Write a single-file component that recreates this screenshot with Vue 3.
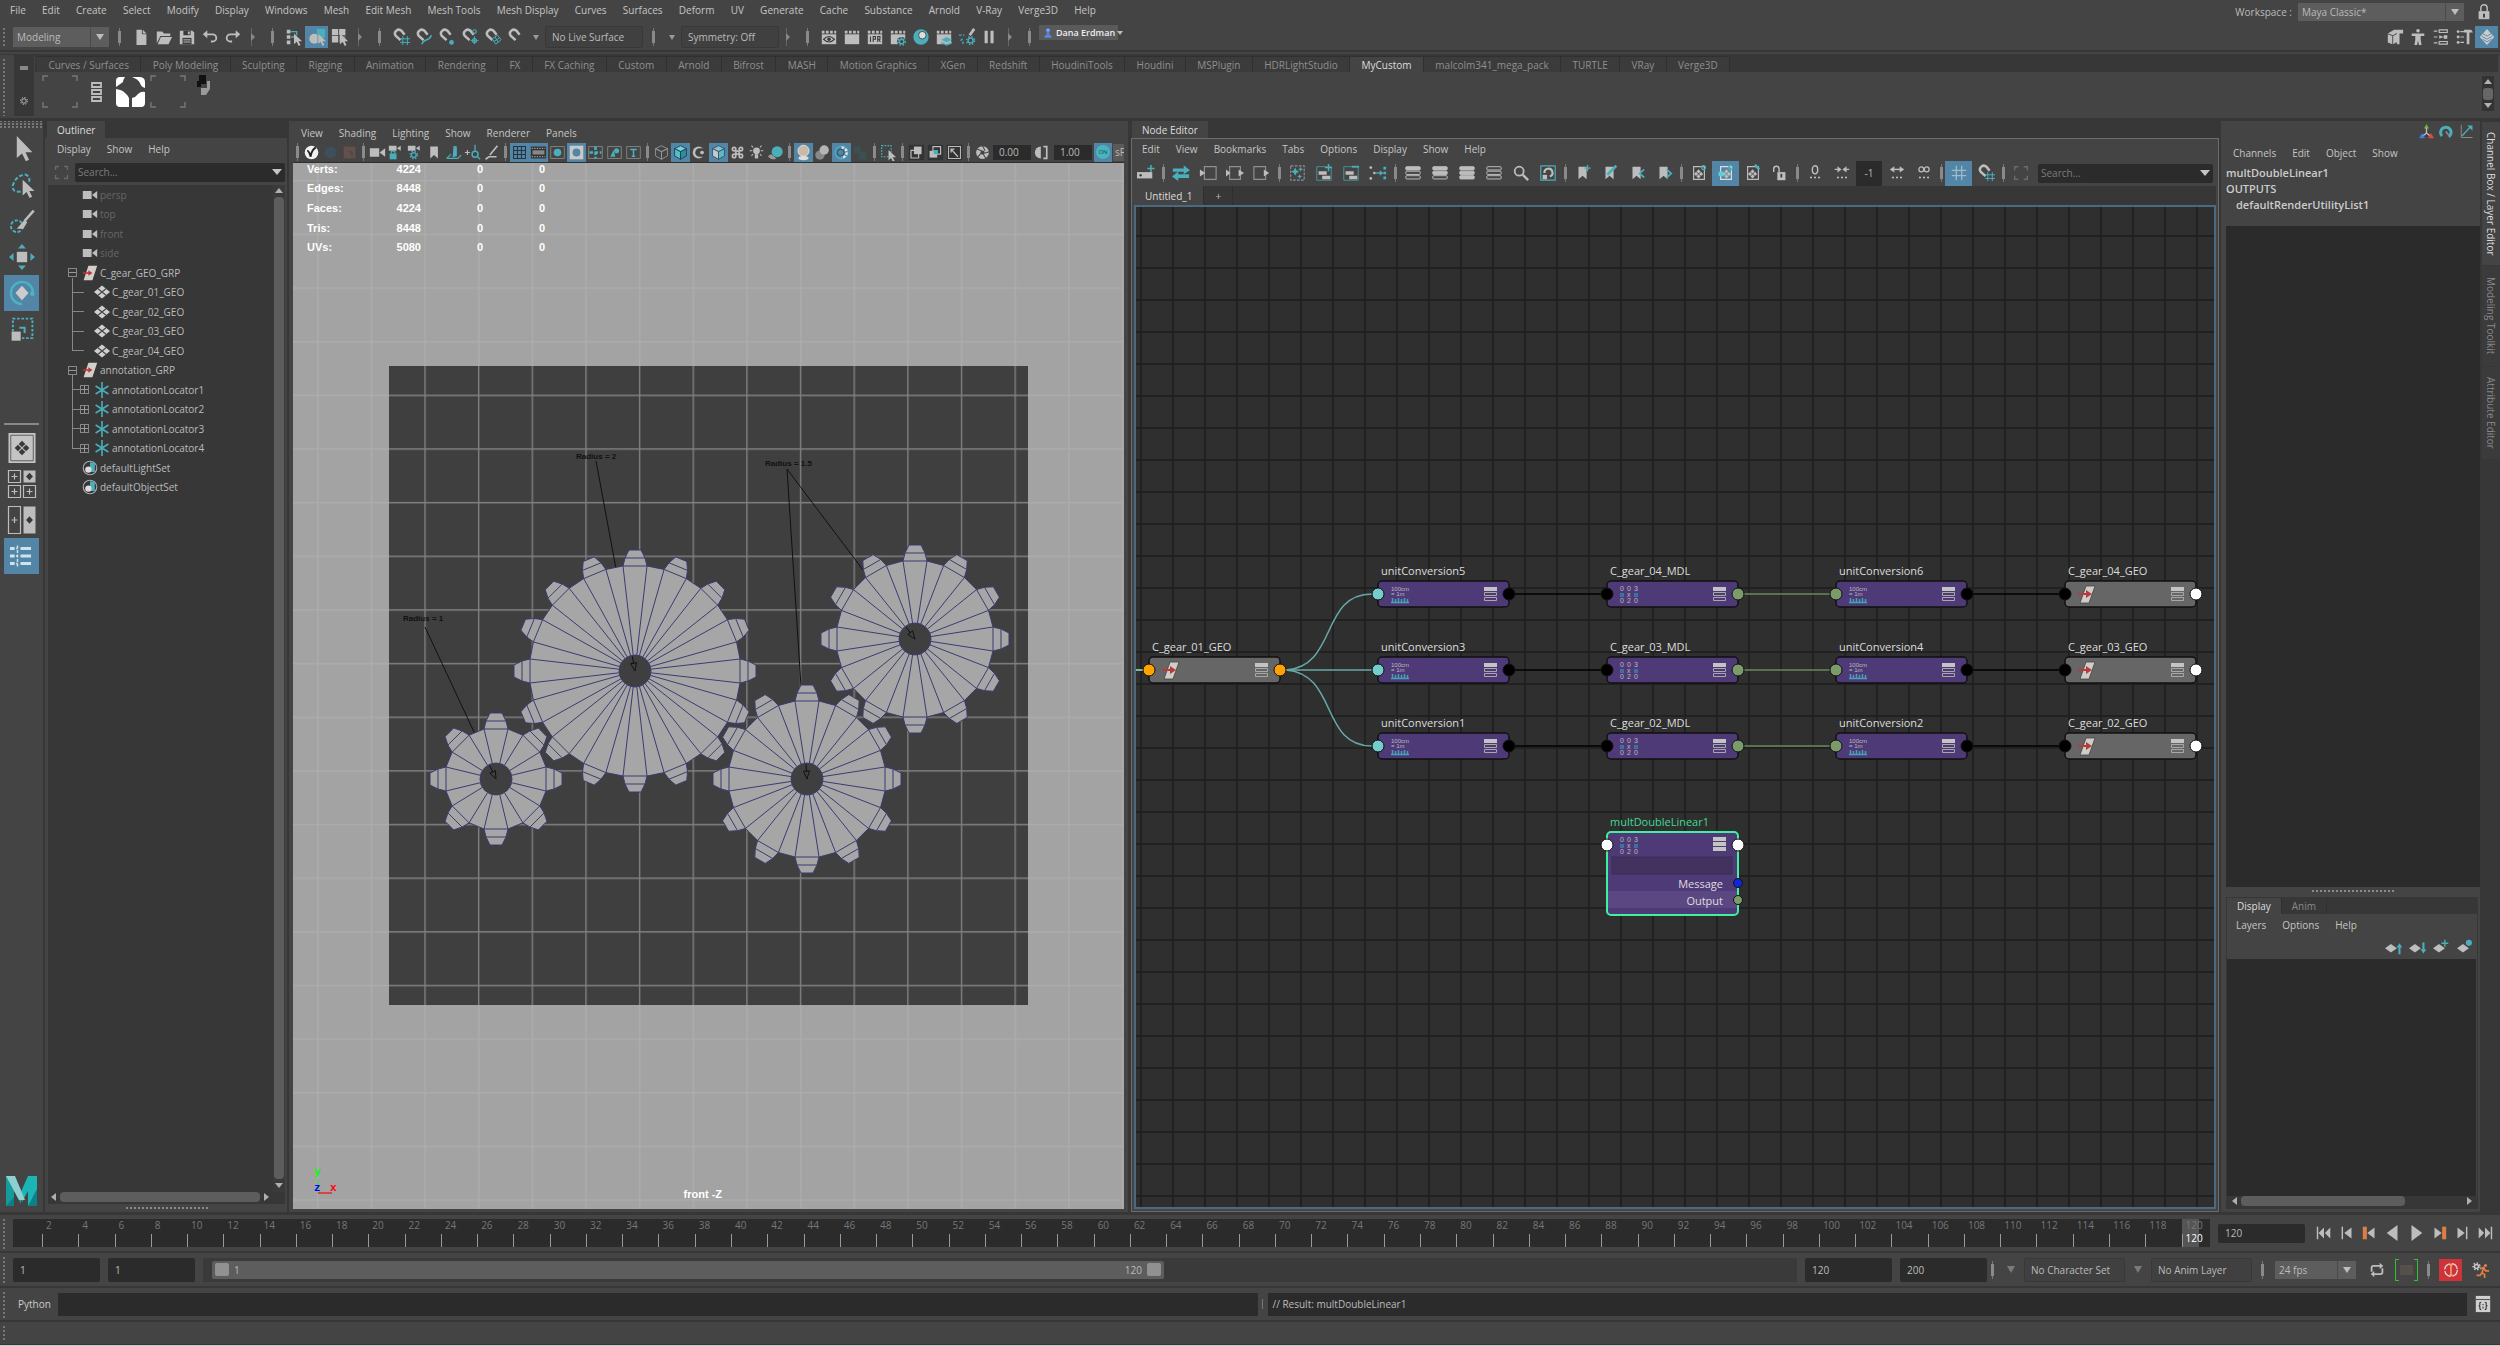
<script setup>
const menus = ['File', 'Edit', 'Create', 'Select', 'Modify', 'Display', 'Windows', 'Mesh', 'Edit Mesh', 'Mesh Tools', 'Mesh Display', 'Curves', 'Surfaces', 'Deform', 'UV', 'Generate', 'Cache', 'Substance', 'Arnold', 'V-Ray', 'Verge3D', 'Help']
const shelves = ['Curves / Surfaces', 'Poly Modeling', 'Sculpting', 'Rigging', 'Animation', 'Rendering', 'FX', 'FX Caching', 'Custom', 'Arnold', 'Bifrost', 'MASH', 'Motion Graphics', 'XGen', 'Redshift', 'HoudiniTools', 'Houdini', 'MSPlugin', 'HDRLightStudio', 'MyCustom', 'malcolm341_mega_pack', 'TURTLE', 'VRay', 'Verge3D']
const viewMenus = ['View', 'Shading', 'Lighting', 'Show', 'Renderer', 'Panels']
const nodeMenus = ['Edit', 'View', 'Bookmarks', 'Tabs', 'Options', 'Display', 'Show', 'Help']

// Shared icon fragments
const G = '#bdbdbd'
const T = '#4aaebb'
const D = '#3a3a3a'
const f = (d, c = G, extra = '') => `<path d="${d}" fill="${c}" ${extra}/>`
const s = (d, c = G, w = 1.5, extra = '') => `<path d="${d}" fill="none" stroke="${c}" stroke-width="${w}" ${extra}/>`
const circ = (x, y, r, c = G) => `<circle cx="${x}" cy="${y}" r="${r}" fill="${c}"/>`
const ring = (x, y, r, c = G, w = 1.5, extra = '') => `<circle cx="${x}" cy="${y}" r="${r}" fill="none" stroke="${c}" stroke-width="${w}" ${extra}/>`
const cog = (x, y, r, c = T) => ring(x, y, r, c, 1.6) + ring(x, y, r + 1.6, c, 1.6, 'stroke-dasharray="1.6 1.9"')
const arrow = (x, y) => f(`M${x} ${y}v12l3-2.6 2.2 4.6 2-1-2.2-4.4h4z`)
const magnet = s('M9.500 13.500 L4 8.500 A4.300 4.300 0 0 1 10.500 3 L14 7.500', G, 2.8)
const clap = f('M2 7h16v11H2z') + s('M2 4.5h16', G, 3, 'stroke-dasharray="3 1.6"')
const cam = f('M2 6h10v9H2zM12.5 10.5L18 6v9z')
const camSmall = f('M1 2h9v6H1zM10.5 5L15 2v6z')
const bmk = f('M5 3h9v14l-4.5-4L5 17z')
const cube = (a, b, c, st) => f('M10 2l7 3.5-7 3.5-7-3.5z', a, `stroke="${st}"`) + f('M3 5.5L10 9v9l-7-4z', b, `stroke="${st}"`) + f('M17 5.5L10 9v9l7-4z', c, `stroke="${st}"`)
const stack = (a, b, c) => [a, b, c].map((on, i) => `<rect x="2" y="${3 + i * 5}" width="16" height="3.6" rx="1" fill="${on ? G : 'none'}" stroke="${G}" stroke-width="1.1"/>`).join('')
const dots = circ(5.5, 15, 1.2) + circ(10, 15, 1.2) + circ(14.5, 15, 1.2)
const four = (x, y, r, c) => [[0, -r], [r, 0], [0, r], [-r, 0]].map(([a, b]) => f(`M${x + a} ${y + b - r + 0.5}l${r - 0.5} ${r - 0.5}-${r - 0.5} ${r - 0.5}-${r - 0.5}-${r - 0.5}z`, c)).join('')
const frame = s('M2 3h16v14H2z', '#8a8a8a', 1)
const layer = f('M0 11l7-5 7 5-7 5z')

const icons = {
  file: f('M5 2h6v5h5v12H5z') + f('M12 2l4 4h-4z'),
  open: f('M2 4h6l2 2h7v3H6l-4 8z') + f('M6.5 10H19l-4 8H3z'),
  save: f('M2 3h14l2 2v13H2z') + f('M6 3h8v5H6z', D) + f('M11 4h2v3h-2z') + f('M5 11h10v7H5z', D) + s('M6 13.2h8M6 15.6h8', G, 1.1),
  undo: s('M5 7h8a4 4 0 0 1 0 8h-2', G, 2) + f('M2 7l5-4.5v9z'),
  redo: s('M15 7H7a4 4 0 0 0 0 8h2', G, 2) + f('M18 7l-5-4.5v9z'),
  selH: f('M2 2h4v4H2zM2 8h4v4H2zM2 14h4v4H2z') + s('M6 4h7v4M7 10h3', T, 1.4) + arrow(10, 6),
  selO: f('M10 1h9v10h-9z', T) + circ(7, 12, 5.5) + arrow(11, 6) + s('M11 6v12', '#5285a6', 0.8),
  selC: f('M1 1h7v7H1zM9 1h7v7H9zM1 9h7v7H1z') + f('M9 9h7v7H9z', '#777') + arrow(10, 6),
  mGrid: magnet + s('M9 12h11M9 16h11M12 9v10M17 9v10', T, 1.1),
  mCurve: magnet + s('M8 18c0-6 9-3 10-10', T, 1.8),
  mPoint: magnet + circ(15, 16, 2.6, T),
  mProj: magnet + ring(15, 4, 2, T, 1.2) + ring(15, 14, 2.2, T, 1.3) + s('M15 9v9M10.5 14h9', T, 1),
  mPlane: magnet + s('M9 12l6-4 4 5-6 5zM12 10l4 6M11 15l6-4', T, 1.1),
  mLive: magnet,
  eye: clap + s('M4 12.5q6-6 12 0q-6 6-12 0z', D, 1.2) + circ(10, 12.5, 2, D),
  clap,
  ipr: clap + s('M5 9.5v6M8 15.5v-6h2.5v3H8M13 15.5v-6h2.5v3H13M14 12.5l2 3', D, 1.2),
  clapCog: clap + circ(14, 15, 5, '#444') + cog(14, 15, 2.5),
  hyper: circ(10, 10, 8.5, T) + circ(11.5, 8, 4.2, '#ddd') + ring(11.5, 8, 4.2, '#444', 1),
  clapLay: clap + f('M7 13l6-3 6 3-6 3z', T) + s('M7 16l6 3 6-3', T, 1.4),
  paint: s('M18 1l-5 7', G, 3) + s('M1 8h6M5 12l-3 3M6 15l-1 3', T, 1.4, 'stroke-dasharray="3 1.5"') + cog(14, 14, 2.8),
  pause: f('M4 3h3.5v14H4zM10.5 3H14v14h-3.5z'),
  box3d: f('M2 6l7-4 5 2-6 4zM2 7l5 2v9l-5-2zM8 9l5-3v9l-5 3z') + f('M9 2h10v4h-4v12h-3V6z'),
  human: circ(10, 3, 2) + f('M3 6h14v3h-4v4l1 6h-3l-1-5-1 5H6l1-6V9H3z'),
  attr: s('M8 2h9v3H8zM8 15h9v3H8zM2 3.5h4M2 16.5h4M2 10h4', G, 1.3) + f('M8 8l5 2-5 2zM13 8h4v4h-4z'),
  tools: circ(3.5, 4, 1.6) + circ(3.5, 10, 1.6) + circ(3.5, 16, 1.6) + s('M6 4h4M6 10h4M6 16h4', G, 1.3) + f('M10 2h8l2 3h-4v13h-3V5h-3z'),
  layers: f('M10 1l8 9-8 9-8-9z', '#ccc') + s('M5 6l5 3 5-3M4 9l6 3.4L16 9M5 12.4l5 3 5-3', '#5285a6', 1),
  lock: f('M4 9h12v9H4z') + s('M6.5 9V5.5a3.5 3.5 0 0 1 7 0V9', G, 1.6) + f('M9 12h2v4H9z', '#333'),

  vray: circ(10, 10, 8, '#f2f2f2') + s('M5 8q2 0 4 7Q10 7 15 4', '#222', 2.2),
  ball: circ(10, 10, 7, '#3d4f5c'),
  dimsq: f('M3 3h14v14H3z', '#63504a') + f('M8 7l6 9V9z', '#4a4a4a'),
  cam: f('M1 5h11v10H1zM12.5 10L19 5v10z'),
  camLock: camSmall + f('M2 11h8v7H2z', T) + s('M4 11V8.5h4V11', T, 1.4),
  camCog: camSmall + cog(8, 13, 2.8),
  bmk,
  plane: f('M10 2l4 1v11l-5 2z', T) + s('M2 17l5-5M2 17h13l4-4', T, 1.4),
  pan: s('M1 10h6M4 7v6', G, 1.3) + ring(13, 12, 3.5, T, 1.7) + s('M13 1v7M16 15l3 3', T, 1.5),
  pen: s('M17 2L8 13M3 18l4-3h9', G, 2),
  grid: s('M3 3h14v14H3zM7.6 3v14M12.3 3v14M3 7.6h14M3 12.3h14', '#26333c', 1.2),
  film: f('M1 3h18v14H1z', '#333') + s('M2 5.2h16M2 14.8h16', '#999', 1.6, 'stroke-dasharray="1.6 1.4"') + f('M3 7.4h14v5H3z', '#888'),
  rgate: frame + circ(10, 10, 4.5, T),
  gmask: f('M2 2h16v16H2z', '#c8c8c8') + circ(10, 10, 4.6, '#5285a6'),
  fchart: frame + s('M10 3v14M3 10h14', T, 3, 'stroke-dasharray="4 2"'),
  safe: frame + f('M5 15l4-8 2 8z', T) + circ(12.5, 8, 3, T),
  title: frame + s('M6 6.5h8M10 6.5v8M8 14.5h4', T, 1.8),
  wire: cube('none', 'none', 'none', '#999'),
  solid: cube('#6cd3de', '#55bccb', '#2c8fa0', '#1d3b46'),
  half: circ(9, 10, 7) + f('M10 5h8v10h-8a5 5 0 0 1 0-10z', '#444') + circ(13, 10, 2.2),
  wsolid: cube('#8fc0cb', '#c9c9c9', '#5fb7c4', '#28536c'),
  check: [[6, 6], [14, 6], [10, 10], [6, 14], [14, 14]].map(([x, y]) => circ(x, y, 3) + circ(x, y, 1, D)).join(''),
  bulb: circ(10, 8, 4) + f('M8 12h4v5H8z') + s('M2 8h3M15 8h3M4 2l2 2M16 2l-2 2M4 14l2-2M16 14l-2-2', G, 1.2),
  shadow: circ(12, 9, 6.5, T) + f('M1 14q4 6 10 3l-6-5z', '#999'),
  ao: '<ellipse cx="10" cy="16.500" rx="6" ry="2.500" fill="#ddd"/>' + circ(10, 8, 6.5, '#cbb9a6') + ring(10, 8, 6.5, '#e8e8e8', 1),
  blur: circ(7, 13, 5.5, '#888') + circ(12, 7, 5.5, '#b5b5b5'),
  aa: ring(10, 10, 7.5, T, 1.6) + s('M10 4a6 6 0 0 1 0 12', '#e0e0e0', 3, 'stroke-dasharray="3 1.5"') + ring(9, 10, 4, '#26485e', 1),
  dim2: f('M2 3h8v8H2zM8 9h9v9H8z', '#3b5053'),
  isel: s('M2 2h11v13H2z', T, 1.4, 'stroke-dasharray="2 1.4"') + arrow(10, 7),
  xr1: f('M1 1h18v18H1z', '#333') + f('M7 3h9v9H7z') + s('M3.5 7.5h9v9h-9z', G, 1.4),
  xr2: f('M1 1h18v18H1z', '#333') + s('M7 3h9v9H7z', G, 1.4) + f('M3 8h9v8H3z') + f('M8 7h5v5H8z', T),
  xr3: f('M1 1h18v18H1z', '#333') + s('M3 3h14v14H3z', G, 1.2) + s('M6 6l8 9M6 10V6h4', G, 1.6),
  iris: ring(10, 10, 5, G, 5) + s('M10 2l3 6M18 9l-6 2M14 17l-3-5M4 16l4-5M3 6l6 2', '#444', 1.2),
  gamma: f('M8 3v14a7 7 0 0 1 0-14z') + s('M11 3h4v14h-4', G, 2),

  nAdd: f('M0 9h17v7H0z') + circ(4, 12.5, 1.3, D) + s('M15.500 1v8M11.500 5h8', T, 1.7),
  swap: f('M1 5h12V1.500L20 7l-7 4.500V8.500H1z', T) + f('M19 11.500H7V8l-7 6 7 5v-3.500h12z', T),
  nIn: s('M6 3h13v14H6z', '#8f8f8f', 1.3) + f('M1 6l6 4-6 4z'),
  nIO: s('M4 3h12v14H4z', '#8f8f8f', 1.3) + f('M0 6l5 4-5 4zM14 6l6 4-6 4z'),
  nOut: s('M1 3h13v14H1z', '#8f8f8f', 1.3) + f('M12 6l6 4-6 4z'),
  clear: s('M3 2h15v16H3z', '#8f8f8f', 1.3, 'stroke-dasharray="3 1.500"') + f('M8 4l1.500 3 3 1.500-3 1.500L8 13l-1.500-3-3-1.500 3-1.500zM14 3l.8 2 2 .8-2 .8-.8 2-.8-2-2-.8 2-.8zM13 11l.8 2 2 .8-2 .8-.8 2-.8-2-2-.8 2-.8z', T),
  gAdd: s('M2 3h16v15H2z', T, 0.8) + f('M4 8h9v4H4zM8 13h9v4H8z') + s('M15 0v8M11 4h8', T, 1.600),
  gRem: s('M2 3h16v15H2z', T, 0.8) + f('M4 8h9v4H4zM8 13h9v4H8z') + s('M11 3h8', T, 2),
  graph: circ(2, 4, 1.500) + circ(2, 16, 1.500) + circ(6, 10, 1.500) + s('M8 10h5', T, 1.600) + f('M12 7l4 3-4 3zM16 3h3v3h-3zM16 8.500h3v3h-3zM16 14h3v3h-3z', T),
  b1: stack(1, 0, 0),
  b2: stack(1, 1, 0),
  b3: stack(1, 1, 1),
  b0: stack(0, 0, 0),
  find: ring(8, 8, 5, G, 2) + s('M12 12l6 6', G, 2.600),
  sync: s('M2 2h16v16H2z', T, 1.300) + f('M4 12h5v5H4z') + s('M6 10a4.500 4.500 0 1 1 6 4', G, 2.400),
  bAdd: bmk + s('M15 1v7M11.500 4.500h7', T, 1.500),
  bEdit: bmk + s('M17 2L7 12', T, 3),
  bPrev: bmk + s('M18 6l-5 4.500 5 4.500', T, 2),
  bNext: bmk + s('M13 6l5 4.500-5 4.500', T, 2),
  pin1: s('M4 3h12v14H4z', G, 1.300) + four(9.500, 11, 2.800, G) + ring(15, 4, 2.200, T, 1.300),
  pin2: s('M4 3h12v14H4z', '#ddd', 1.300) + four(10.500, 11, 2.800, G) + circ(4.500, 11, 3, '#5cd0dc') + ring(15, 4, 2.200, T, 1.300),
  pin3: s('M4 3h12v14H4z', G, 1.300) + four(9.500, 11, 2.800, G) + s('M12 1l5 5', T, 3),
  unlock: f('M7 9h9v9H7z') + s('M3 9V5.500a3 3 0 0 1 6 0V9', G, 1.600) + f('M10.500 11h2v4h-2z', D),
  zero: `<ellipse cx="10" cy="6.500" rx="3" ry="4.500" fill="none" stroke="${G}" stroke-width="1.600"/>` + dots,
  inn: s('M2 6h6M12 6h6', G, 1.600) + f('M5 2.500l4.500 3.500L5 9.500zM15 2.500L10.500 6l4.500 3.500z') + dots,
  out: s('M5 6h10', G, 1.600) + f('M7 2.500L2 6l5 3.500zM13 2.500L18 6l-5 3.500z') + dots,
  inf: ring(7, 6, 2.700, G, 1.400) + ring(13, 6, 2.700, G, 1.400) + dots,
  hash: s('M7 2v16M13 2v16M2 7h16M2 13h16', '#9fbccb', 1.400),
  full: s('M3 7V3h4M13 3h4v4M17 13v4h-4M7 17H3v-4', '#6a6a6a', 1.600),

  skipS: f('M2 3h1.600v14H2zM10 4v12l-6-6zM17 4v12l-6-6z'),
  stepS: f('M4 3h1.600v14H4zM15 4v12l-8-6z'),
  keyS: f('M2 3h4.500v14H2z', '#dd7f43') + f('M15 4v12l-8-6z'),
  playB: f('M15 1v18L3 10z'),
  playF: f('M5 1v18l12-9z'),
  keyE: f('M13.500 3H18v14h-4.500z', '#dd7f43') + f('M5 4v12l8-6z'),
  stepE: f('M14.400 3H16v14h-1.600zM5 4v12l8-6z'),
  skipE: f('M16.400 3H18v14h-1.600zM3 4v12l6-6zM10 4v12l6-6z'),
  loop: s('M4 12V7.500q0-2 2-2h9M16 8v4.500q0 2-2 2H5', G, 2) + f('M13 2l4 3.500-4 3.500zM7 11l-4 3.500L7 18z'),
  script: f('M2 1h16v18H2z', '#d0d0d0') + s('M2 5h16', '#555', 1.200) + s('M8 8q-2 0-1.500 2t-1.500 2q2 0 1.500 2T8 16.500M12 8q2 0 1.500 2t1.500 2q-2 0-1.500 2T12 16.500M10 10v1.500M10 13v2', '#333', 1.200),
  run: cog(5, 6, 2.200, '#ccc') + circ(15, 5, 1.800, '#dd7f43') + s('M9 9l4-2 2 4 4 0M13 8l-2 5 3 2 0 4M11 13l-2 3-4 0', '#dd7f43', 1.900),
  autokey: ring(10, 10, 7, '#ddd', 1.400, 'stroke-dasharray="9 2"') + s('M10 4v12M8 16h4M8 4h4', '#f0a070', 1.800),

  axes: f('M6.500 6l3.500-6 3.500 6z', '#6fae3c') + s('M10 5v7M10 12l-5 4M10 12l5 4', '#bbb', 1.800) + f('M0 19l4-7 4 7z', '#3f7de0') + f('M12 19l4-7 4 7z', '#d84a4a'),
  spin: s('M4 16a7 7 0 1 1 9 1', T, 4) + s('M9 10l5 6', '#888', 2.500),
  slope: s('M3 1v17h15', '#8a8a8a', 1.300) + s('M4 16L15 4', T, 1.600) + f('M11 2h7v7z', T),
  lUp: layer + s('M17 18V9', T, 2.500) + f('M13.500 10l3.500-5 3.500 5z', T),
  lDn: layer + s('M17 4v9', T, 2.500) + f('M13.500 12l3.500 5 3.500-5z', T),
  lNew: layer + s('M14 1v8M10 5h8', T, 1.700),
  lSel: layer + circ(14, 4.500, 3.600, T),

  tArrow: f('M6 0v17l4-3.500 3 6 2.400-1.200L12.700 12.500H18z'),
  tLasso: s('M9 15Q2 16 3 10Q6 2 13 2Q17 4 15 9', T, 1.600, 'stroke-dasharray="3 1.500"') + f('M10.500 6v12l3-2.600 2.300 4.600 2-1-2.200-4.400h4z'),
  tPaint: ring(6, 14, 4.500, T, 1.500, 'stroke-dasharray="2.500 1.300"') + s('M19 2l-7 8', G, 2) + f('M12 9l2 2-3 5-5 0z'),
  tMove: f('M6 6h8v8H6z') + f('M10 0l3 3.500H7zM10 20l3-3.500H7zM0 10l3.500-3v6zM20 10l-3.500-3v6z', T),
  tRot: f('M10 4.500l5 5.500-5 5.500L5 10z', '#ccc') + s('M10 18.500A8.500 8.500 0 1 1 18.500 10', '#4ab4c2', 1.800) + circ(18, 10.500, 1.800, '#4ab4c2'),
  tScale: s('M3 12V2h15v15h-8', T, 1.500, 'stroke-dasharray="2 1.300"') + s('M8 9h4v4', T, 1.600) + f('M2 12h7v7H2z'),
  lay1: f('M1 0h18v20H1z', '#c4c4c4') + s('M2.500 1.500h15v17h-15z', '#555', 0.6) + four(10, 10, 2.700, D),
  lay2: s('M1 1h8v8H1zM11 11h8v8h-8zM1 11h8v8H1z', G, 0.8) + f('M11 1h8v8h-8z') + f('M15 2.500l2.300 2.500-2.300 2.500-2.300-2.500z', D) + s('M5 3v4M3 5h4M5 13v4M3 15h4M15 13v4M13 15h4', G, 0.8),
  lay3: s('M1 1h8v18H1z', G, 0.8) + f('M11 1h8v18h-8z') + f('M15 7.500l2.300 2.500-2.300 2.500-2.300-2.500z', D) + s('M5 8v4M3 10h4', G, 0.8),
  lay4: s('M7 3v14M3 5h4M3 10h4M3 15h4', '#cfe3ee', 1, 'stroke-dasharray="2 1"') + f('M9 4h7v2H9zM9 9h7v2H9zM9 14h7v2H9zM2 4h3v2H2zM2 9h3v2H2zM2 14h3v2H2z', '#cfe3ee'),

  group: f('M8 1h11l-6 18H2z', '#d2cfca') + s('M1 10h8', '#b33', 2) + f('M8 6.500l5 3.500-5 3.500z', '#b33'),
  mesh: f('M10 2l10 8-10 8L0 10z', '#d0d0d0') + s('M5 6l10 8M15 6L5 14', '#444', 1.400),
  locator: s('M10 0v20M2 5l16 10M2 15L18 5', T, 2),
  set: ring(10, 10, 8.500, '#aaa', 1.400) + f('M10 3h6v12h-6z', T) + circ(8, 12, 4, '#ddd'),
  cog: ring(10, 10, 4.500, G, 1.800) + ring(10, 10, 7, G, 2, 'stroke-dasharray="2.500 3"'),
  python: f('M6 0h7v9H8v3H4V6h2z', '#111') + f('M14 6h3v8l-4 6H8v-7h6z', '#9a9a9a'),
  user: circ(10, 6, 4, '#5b86e0') + f('M8 9h4v4l4 2v3H4v-3l4-2z', '#5b86e0') + circ(10, 5, 1.800, '#9db9f5')
}

const status = ['|', 'file', 'open', 'save', 'undo', 'redo', '>', '|', 'selH', '*selO', 'selC', '>', '|', 'mGrid', 'mCurve', 'mPoint', 'mProj', 'mPlane', 'mLive', 'v', '=No Live Surface', '|', 'v', '=Symmetry: Off', '>', '|', 'eye', 'clap', 'ipr', 'clapCog', 'hyper', 'clapLay', 'paint', 'pause', '>', '|']
const statusRight = ['box3d', 'human', 'attr', 'tools', '*layers']
const viewBar = ['|', 'vray', 'ball', 'dimsq', '|', 'cam', 'camLock', 'camCog', 'bmk', 'plane', 'pan', 'pen', '|', '*grid', '*film', 'rgate', '*gmask', 'fchart', 'safe', 'title', '|', 'wire', '*solid', 'half', '*wsolid', 'check', 'bulb', 'shadow', '|', '*ao', 'blur', '*aa', 'dim2', '|', 'isel', '|', 'xr1', 'xr2', 'xr3', '|', 'iris']
const nodeBar = ['nAdd', '|', 'swap', 'nIn', 'nIO', 'nOut', '|', 'clear', 'gAdd', 'gRem', 'graph', '|', 'b1', 'b2', 'b3', 'b0', 'find', 'sync', '|', 'bAdd', 'bEdit', 'bPrev', 'bNext', '|', 'pin1', '*pin2', 'pin3', 'unlock', '|', 'zero', 'inn']
const nodeBar2 = ['out', 'inf', '|', '*hash', 'mGrid', '|', 'full']
const play = ['skipS', 'stepS', 'keyS', 'playB', 'playF', 'keyE', 'stepE', 'skipE']
const tools = ['tArrow', 'tLasso', 'tPaint', 'tMove', '*tRot', 'tScale']
const layouts = ['lay1', 'lay2', 'lay3', '*lay4']

const bare = n => n.replace(/^[*=]/, '')

const tree = [
  ...['persp', 'top', 'front', 'side'].map(n => ({ n, icon: 'cam', dim: true })),
  { n: 'C_gear_GEO_GRP', icon: 'group', box: '-' },
  ...[1, 2, 3, 4].map(i => ({ n: `C_gear_0${i}_GEO`, icon: 'mesh', child: true, last: i === 4 })),
  { n: 'annotation_GRP', icon: 'group', box: '-' },
  ...[1, 2, 3, 4].map(i => ({ n: `annotationLocator${i}`, icon: 'locator', child: true, box: '+', last: i === 4 })),
  { n: 'defaultLightSet', icon: 'set' },
  { n: 'defaultObjectSet', icon: 'set' }
]

const stats = [['Verts:', 4224], ['Edges:', 8448], ['Faces:', 4224], ['Tris:', 8448], ['UVs:', 5080]]

// Gear geometry: teeth, outline and spokes around a hub
function gear(cx, cy, n, R, fx, fy) {
  const pt = (a, x, y) => `${(cx + x * Math.cos(a) - y * Math.sin(a)).toFixed(1)} ${(cy + x * Math.sin(a) + y * Math.cos(a)).toFixed(1)}`
  let outline = ''
  let lines = ''
  const half = Math.asin(12 / Math.hypot(R, 12))
  for (let i = 0; i < n; i++) {
    const a = (i * 2 * Math.PI) / n
    const pts = [[R, -12], [R + 8, -10], [R + 16, -6], [R + 16, 6], [R + 8, 10], [R, 12]].map(([x, y]) => pt(a, x, y))
    outline += (i ? 'L' : 'M') + pts.join('L')
    lines += `M${pts[0]}L${pts[5]}M${pts[1]}L${pts[4]}`
    lines += `M${pt(a - half, 16, 0)}L${pts[0]}M${pt(a + half, 16, 0)}L${pts[5]}`
  }
  const d = Math.hypot(fx - cx, fy - cy)
  const ux = (fx - cx) / d
  const uy = (fy - cy) / d
  const tail = `M${cx + ux * 15} ${cy + uy * 15}L${cx + ux * 7} ${cy + uy * 7}M${cx} ${cy}L${cx + ux * 8 - uy * 3} ${cy + uy * 8 + ux * 3}L${cx + ux * 8 + uy * 3} ${cy + uy * 8 - ux * 3}Z`
  return { cx, cy, outline: outline + 'Z', lines, tail, leader: `M${fx} ${fy}L${cx} ${cy}` }
}
const gears = [
  gear(203, 616, 8, 50, 132, 464),
  gear(342, 508, 16, 105, 303, 298),
  gear(514, 616, 12, 78, 494, 306),
  gear(622, 476, 12, 78, 494, 306)
]
const notes = [
  { t: 'Radius = 1', x: 110, y: 458 },
  { t: 'Radius = 2', x: 283, y: 296 },
  { t: 'Radius = 1.5', x: 472, y: 303 }
]

const cols = [13, 242, 471, 700, 929]
const rows = [387, 463, 539]
const nodes = [{ t: 'C_gear_01_GEO', x: 13, y: 463, kind: 'geo', a: '#ffa200', b: '#ffa200' }]
const chain = [['5', '04', '6'], ['3', '03', '4'], ['1', '02', '2']]
chain.forEach(([u, g, v], i) => {
  const y = rows[i]
  nodes.push(
    { t: 'unitConversion' + u, x: cols[1], y, kind: 'unit', a: '#73cdcb', b: '#000' },
    { t: `C_gear_${g}_MDL`, x: cols[2], y, kind: 'mult', a: '#000', b: '#7b9c6a' },
    { t: 'unitConversion' + v, x: cols[3], y, kind: 'unit', a: '#7b9c6a', b: '#000' },
    { t: `C_gear_${g}_GEO`, x: cols[4], y, kind: 'geo', a: '#000', b: '#fff' }
  )
})

const ticks = Array.from({ length: 60 }, (_, i) => (i + 1) * 2)
const tickAt = t => ({ left: (((t - 2) * 18.14 + 29) / 2198) * 100 + '%' })
</script>

<template>
  <div class="app">
    <header class="menubar">
      <nav class="menu main-menu"><button v-for="m in menus" :key="m">{{ m }}</button></nav>
      <div class="workspace">
        <label for="ws">Workspace :</label>
        <span class="combo ws"><select id="ws"><option>Maya Classic*</option></select></span>
        <button class="ic" aria-label="Lock workspace"><svg viewBox="0 0 20 20" v-html="icons.lock" /></button>
      </div>
    </header>

    <div class="status">
      <i class="grip" />
      <span class="combo mode"><select aria-label="Menu set"><option>Modeling</option></select></span>
      <template v-for="(n, i) in status" :key="i">
        <i v-if="n === '|'" class="sep" />
        <i v-else-if="n === '>'" class="chev" />
        <i v-else-if="n === 'v'" class="down" />
        <button v-else-if="n[0] === '='" class="flat">{{ bare(n) }}</button>
        <button v-else class="ic" :class="{ on: n[0] === '*' }" :aria-label="bare(n)"><svg viewBox="0 0 20 20" v-html="icons[bare(n)]" /></button>
      </template>
      <button class="user"><svg viewBox="0 0 20 20" v-html="icons.user" />Dana Erdman<i class="tri" /></button>
      <div class="right">
        <button v-for="n in statusRight" :key="n" class="ic" :class="{ on: n[0] === '*' }" :aria-label="bare(n)"><svg viewBox="0 0 20 20" v-html="icons[bare(n)]" /></button>
      </div>
    </div>

    <div class="band" />

    <section class="shelf">
      <i class="grip" />
      <div class="shelf-side">
        <button aria-label="Shelf list"><i class="dash" /></button>
        <button aria-label="Shelf options"><svg viewBox="0 0 20 20" v-html="icons.cog" /></button>
      </div>
      <div class="shelf-body">
        <div class="shelf-tabs"><div class="shelf-set"><button v-for="t in shelves" :key="t" :class="{ sel: t === 'MyCustom' }">{{ t }}</button></div></div>
        <div class="shelf-items">
          <button class="slot" aria-label="Shelf item 1"><svg viewBox="0 0 36 34"><path d="M1 6V1h5M30 1h5v5M35 27v5h-5M6 32H1v-5" fill="none" stroke="#777" stroke-width="1.4" /></svg></button>
          <button class="slot" aria-label="Stack"><svg viewBox="0 0 36 34"><path d="M14 8h9v4h-9zM14 15h9v4h-9zM14 22h9v4h-9z" fill="none" stroke="#bdbdbd" stroke-width="1.8" /></svg></button>
          <button class="slot" aria-label="Puzzle"><svg viewBox="0 0 36 34"><path d="M2 6q0-4 4-4h5q-2 3-2 5l-7 5zM18 2h7q6 0 6 5v6q-4-1-5-5-2-4-8-6zM2 14q7 1 9 4 5 4 4 8v6H6q-4 0-4-4zM31 17v11q0 4-4 4h-9v-9q4-1 6-4 3-3 7-2z" fill="#fff" /></svg></button>
          <button class="slot" aria-label="Shelf item 4"><svg viewBox="0 0 36 34"><path d="M1 6V1h5M30 1h5v5M35 27v5h-5M6 32H1v-5" fill="none" stroke="#777" stroke-width="1.4" /></svg></button>
          <button class="slot py" aria-label="Python script"><svg viewBox="0 0 20 20" v-html="icons.python" /></button>
          <div class="mini-scroll"><i class="up" /><i class="thumb" /><i class="dn" /></div>
        </div>
      </div>
    </section>

    <main class="main">
      <aside class="toolbox">
        <i class="hgrip" />
        <button v-for="n in tools" :key="n" class="tool" :class="{ on: n[0] === '*' }" :aria-label="bare(n)"><svg viewBox="0 0 20 20" v-html="icons[bare(n)]" /></button>
        <i class="rule" />
        <button v-for="n in layouts" :key="n" class="tool lay" :class="{ on: n[0] === '*' }" :aria-label="bare(n)"><svg viewBox="0 0 20 20" v-html="icons[bare(n)]" /></button>
        <svg class="logo" viewBox="0 0 31 31">
          <path d="M0 1h8l7 14v14L8 16v15H0z" fill="#169b9c" />
          <path d="M22 1h9v30h-9V16l-6 11-2-8z" fill="#1cb5b5" />
          <path d="M0 1h9l10 24h-6z" fill="#8fcfd2" />
          <path d="M0 31l8-9v9zM31 14v17h-9z" fill="#0d7f86" />
        </svg>
      </aside>

      <section class="outliner">
        <div class="ptabs"><button class="ptab">Outliner</button></div>
        <div class="obody">
          <nav class="menu omenu"><button>Display</button><button>Show</button><button>Help</button></nav>
          <div class="osearch">
            <svg viewBox="0 0 20 20" v-html="icons.full" />
            <label class="search"><input type="text" placeholder="Search..." aria-label="Search outliner"><i class="tri big" /></label>
          </div>
          <div class="tree-wrap">
            <ul class="tree">
              <li v-for="r in tree" :key="r.n" :class="{ child: r.child, dim: r.dim, last: r.last, leaf: r.child && !r.box }">
                <i v-if="r.box" class="box" :class="{ plus: r.box === '+' }" />
                <svg viewBox="0 0 20 20" v-html="icons[r.icon]" />
                <span>{{ r.n }}</span>
              </li>
            </ul>
            <div class="vscroll"><i class="up" /><i class="thumb" /><i class="dn" /></div>
          </div>
          <div class="hscroll"><i class="lt" /><i class="thumb" /><i class="rt" /></div>
          <i class="dots" />
        </div>
      </section>

      <section class="viewport">
        <nav class="menu vmenu"><button v-for="m in viewMenus" :key="m">{{ m }}</button></nav>
        <div class="vbar">
          <template v-for="(n, i) in viewBar" :key="i">
            <i v-if="n === '|'" class="sep" />
            <button v-else class="ic" :class="{ on: n[0] === '*' }" :aria-label="bare(n)"><svg viewBox="0 0 20 20" v-html="icons[bare(n)]" /></button>
          </template>
          <input class="num" type="text" value="0.00" aria-label="Exposure">
          <button class="ic gam" aria-label="Gamma"><svg viewBox="0 0 20 20" v-html="icons.gamma" /></button>
          <input class="num" type="text" value="1.00" aria-label="Gamma value">
          <button class="ic on toggle"><span>ON</span></button>
          <button class="srgb">sF</button>
        </div>
        <div class="scene">
          <svg class="canvas">
            <defs>
              <pattern id="vg" x="24" y="17" width="53.65" height="53.65" patternUnits="userSpaceOnUse">
                <path d="M0 .7H53.65M.7 0V53.65" stroke="#acacac" stroke-width="1.6" fill="none" />
              </pattern>
              <pattern id="vd" x="24" y="17" width="53.65" height="53.65" patternUnits="userSpaceOnUse">
                <path d="M0 .7H53.65M.7 0V53.65" stroke="#808080" stroke-width="1.4" fill="none" />
              </pattern>
            </defs>
            <rect width="100%" height="100%" fill="url(#vg)" />
            <rect x="96" y="203" width="639" height="639" fill="#3f3f3f" />
            <rect x="96" y="203" width="639" height="639" fill="url(#vd)" />
            <path v-for="(g, i) in gears" :key="'l' + i" :d="g.leader" stroke="#111" fill="none" />
            <g v-for="(g, i) in gears" :key="i" stroke="#3b3b72" stroke-width="1">
              <path :d="g.outline" fill="#a6a6a6" />
              <path :d="g.lines" fill="none" />
              <circle :cx="g.cx" :cy="g.cy" r="16" fill="#3f3f3f" />
              <path :d="g.tail" fill="none" stroke="#111" />
            </g>
            <text v-for="n in notes" :key="n.t" :x="n.x" :y="n.y" class="note">{{ n.t }}</text>
          </svg>
          <table class="hud">
            <tbody><tr v-for="r in stats" :key="r[0]"><th scope="row">{{ r[0] }}</th><td>{{ r[1] }}</td><td>0</td><td>0</td></tr></tbody>
          </table>
          <svg class="gizmo" viewBox="0 0 32 44">
            <path d="M10 22v14" stroke="#2fdc2f" fill="none" />
            <path d="M10 36h14" stroke="#e03030" stroke-width="1.6" fill="none" />
            <text x="6" y="18" fill="#0f0">y</text><text x="6" y="34" fill="#00f">z</text><text x="22" y="34" fill="#f00">x</text>
          </svg>
          <span class="camname">front -Z</span>
        </div>
      </section>

      <section class="nodeed">
        <div class="ptabs"><button class="ptab">Node Editor</button></div>
        <div class="nbody">
          <nav class="menu nmenu"><button v-for="m in nodeMenus" :key="m">{{ m }}</button></nav>
          <div class="nbar">
            <template v-for="(n, i) in nodeBar" :key="i">
              <i v-if="n === '|'" class="sep" />
              <button v-else class="ic" :class="{ on: n[0] === '*' }" :aria-label="bare(n)"><svg viewBox="0 0 20 20" v-html="icons[bare(n)]" /></button>
            </template>
            <input class="depth" type="text" value="-1" aria-label="Traversal depth">
            <template v-for="(n, i) in nodeBar2" :key="'b' + i">
              <i v-if="n === '|'" class="sep" />
              <button v-else class="ic" :class="{ on: n[0] === '*' }" :aria-label="bare(n)"><svg viewBox="0 0 20 20" v-html="icons[bare(n)]" /></button>
            </template>
            <label class="search"><input type="text" placeholder="Search..." aria-label="Search nodes"><i class="tri big" /></label>
          </div>
          <div class="ntabs"><button class="sel">Untitled_1</button><button>+</button></div>
          <div class="graph">
            <svg class="canvas">
              <defs>
                <pattern id="ng" x="4" y="28" width="32" height="32" patternUnits="userSpaceOnUse">
                  <path d="M0 1H32M1 0V32" stroke="#212121" stroke-width="2" fill="none" />
                </pattern>
                <g id="stackicon">
                  <path d="M0 0h13v4H0z" fill="#c4c4c4" />
                  <path d="M.5 5.5h12v3H.5zM.5 10.5h12v3H.5z" fill="none" stroke="#a8a8a8" />
                </g>
                <g id="ic-unit">
                  <text x="0" y="5" class="tiny">100cm</text><text x="0" y="10" class="tiny">= 1m</text>
                  <path d="M0 16.5h18M1.5 12v4M4.5 13v3M7.5 12v4M10.5 13v3M13.5 12v4M16.500 13v3" stroke="#43a3b4" stroke-width="1.5" fill="none" />
                </g>
                <g id="ic-mult">
                  <text x="0" y="5" class="tiny wide">0</text><text x="7" y="5" class="tiny wide">0</text><text x="14" y="5" class="tiny wide">3</text>
                  <path d="M0 7h4v4H0zM14 7h4v4h-4z" fill="#3f70a0" /><text x="7" y="11" class="tiny wide">x</text>
                  <text x="0" y="17" class="tiny wide">0</text><text x="7" y="17" class="tiny wide">2</text><text x="14" y="17" class="tiny wide">0</text>
                </g>
                <g id="ic-geo">
                  <path d="M8 0h9l-6 17H2z" fill="#d0cdc8" stroke="#444" stroke-width=".8" />
                  <path d="M0 7h8V4l6 4-6 4V9H0z" fill="#b33c3c" />
                </g>
              </defs>
              <rect width="100%" height="100%" fill="url(#ng)" />
              <g fill="none" stroke-width="1.5">
                <g stroke="#68aaa8">
                  <path d="M150 463C202 459 184 387 236 387" /><path d="M150 463H236" /><path d="M150 463C202 467 184 539 236 539" />
                  <path d="M-4 463H12" stroke="#7dbb9a" stroke-width="2" />
                </g>
                <template v-for="y in rows" :key="y">
                  <path :d="`M373 ${y}H471M831 ${y}H929`" stroke="#000" />
                  <path :d="`M602 ${y}H700`" stroke="#6b8a5c" />
                </template>
              </g>
              <g v-for="n in nodes" :key="n.t">
                <text :x="n.x + 3" :y="n.y - 19" class="ntitle">{{ n.t }}</text>
                <rect :x="n.x" :y="n.y - 13" width="131" height="26" rx="4" :fill="n.kind === 'geo' ? '#666' : '#4f3a78'" stroke="#111" stroke-width="1.5" />
                <use :href="'#ic-' + n.kind" :x="n.x + 13" :y="n.y - 8" />
                <use href="#stackicon" :x="n.x + 106" :y="n.y - 7" />
                <circle :cx="n.x" :cy="n.y" r="6" :fill="n.a" stroke="#111" />
                <circle :cx="n.x + 131" :cy="n.y" r="6" :fill="n.b" stroke="#111" />
              </g>
              <g>
                <text x="474" y="619" class="ntitle picked">multDoubleLinear1</text>
                <rect x="471" y="625" width="131" height="83" rx="4" fill="#4f3a78" />
                <rect x="476" y="650" width="120" height="17" fill="#43325f" stroke="#3b2c55" />
                <rect x="472" y="684" width="129" height="17" fill="#5b4882" />
                <rect x="471" y="625" width="131" height="83" rx="4" fill="none" stroke="#3ef0a0" stroke-width="2" />
                <use href="#ic-mult" x="484" y="630" />
                <path d="M577 630h13v4h-13zM577 635h13v4h-13zM577 640h13v4h-13z" fill="#c4c4c4" />
                <circle cx="471" cy="638" r="6" fill="#fff" stroke="#111" /><circle cx="602" cy="638" r="6" fill="#fff" stroke="#111" />
                <text x="587" y="681" class="nattr">Message</text><text x="587" y="698" class="nattr">Output</text>
                <circle cx="602" cy="676" r="4.5" fill="#1026d8" stroke="#111" /><circle cx="602" cy="693" r="4.5" fill="#7b9c6a" stroke="#111" />
              </g>
            </svg>
          </div>
        </div>
      </section>

      <section class="channel">
        <div class="cicons">
          <button v-for="n in ['axes', 'spin', 'slope']" :key="n" class="ic" :aria-label="n"><svg viewBox="0 0 20 20" v-html="icons[n]" /></button>
        </div>
        <nav class="menu cmenu"><button>Channels</button><button>Edit</button><button>Object</button><button>Show</button></nav>
        <div class="cnames"><b>multDoubleLinear1</b><b>OUTPUTS</b><b class="ind">defaultRenderUtilityList1</b></div>
        <div class="clist" />
        <i class="dots" />
        <div class="layered">
          <div class="ltabs"><button class="sel">Display</button><button>Anim</button></div>
          <nav class="menu lmenu"><button>Layers</button><button>Options</button><button>Help</button></nav>
          <div class="licons">
            <button v-for="n in ['lUp', 'lDn', 'lNew', 'lSel']" :key="n" class="ic" :aria-label="n"><svg viewBox="0 0 20 20" v-html="icons[n]" /></button>
          </div>
          <div class="llist" />
          <div class="hscroll"><i class="lt" /><i class="thumb part" /><i class="rt" /></div>
        </div>
      </section>

      <aside class="vtabs"><button class="sel t1">Channel Box / Layer Editor</button><button class="t2">Modeling Toolkit</button><button class="t3">Attribute Editor</button></aside>
    </main>

    <div class="row timeline">
      <i class="grip" />
      <div class="track">
        <i class="current" />
        <span v-for="t in ticks" :key="t" class="tick" :style="tickAt(t)">{{ t }}<b v-if="t === 120">120</b></span>
      </div>
      <input class="field cur" type="text" value="120" aria-label="Current frame">
      <div class="play"><button v-for="n in play" :key="n" class="ic" :aria-label="n"><svg viewBox="0 0 20 20" v-html="icons[n]" /></button></div>
    </div>

    <div class="row range">
      <i class="grip" />
      <input class="field" type="text" value="1" aria-label="Animation start">
      <input class="field" type="text" value="1" aria-label="Playback start">
      <div class="slider"><div class="bar"><i class="handle" /><span>1</span><span class="end">120</span><i class="handle" /></div></div>
      <input class="field" type="text" value="120" aria-label="Playback end">
      <input class="field" type="text" value="200" aria-label="Animation end">
      <div class="rset">
        <i class="sep" /><i class="hollow" /><button class="flat">No Character Set</button>
        <i class="hollow" /><button class="flat">No Anim Layer</button><i class="sep wide" />
        <span class="combo fps"><select aria-label="Frame rate"><option>24 fps</option></select></span>
        <button class="ic" aria-label="Loop"><svg viewBox="0 0 20 20" v-html="icons.loop" /></button>
        <button class="ic cache" aria-label="Cached playback"><i /></button>
        <i class="sep" />
        <button class="ic auto" aria-label="Auto key"><svg viewBox="0 0 20 20" v-html="icons.autokey" /></button>
        <button class="ic" aria-label="Preferences"><svg viewBox="0 0 20 20" v-html="icons.run" /></button>
      </div>
    </div>

    <div class="row cmd">
      <i class="grip" />
      <label for="cmdline">Python</label>
      <input id="cmdline" class="line" type="text">
      <i class="split" />
      <output class="line">// Result: multDoubleLinear1</output>
      <button class="ic" aria-label="Script editor"><svg viewBox="0 0 20 20" v-html="icons.script" /></button>
    </div>
    <div class="row help"><i class="grip" /></div>
    <div class="edge" />
  </div>
</template>

<style>
body { background: #373737; }
</style>

<style scoped>
.app { display: flex; flex-direction: column; min-height: 100vh; background: #444; color: #bbb; font: 10px/14px "Open Sans", "Noto Sans", sans-serif; overflow: hidden; }
.app *, .app *::before, .app *::after { box-sizing: border-box; }
button, input, select { font: inherit; color: inherit; background: none; border: 0; padding: 0; margin: 0; border-radius: 0; outline: 0; }
button { white-space: nowrap; }
i { display: block; font-style: normal; flex: none; }
svg { display: block; flex: none; }

.menu { display: flex; align-items: center; color: #c4c4c4; }
.menubar { display: flex; height: 22px; justify-content: space-between; }
.main-menu { width: 1096px; height: 20px; padding-left: 10px; justify-content: space-between; }
.workspace { display: flex; align-items: center; padding: 2px 5px 0 0; gap: 6px; }
.workspace .ic { margin-left: 2px; }
.combo { position: relative; display: block; background: #5d5d5d; }
.combo select { width: 100%; height: 100%; appearance: none; padding-left: 4px; }
.combo::after { content: ""; position: absolute; right: 5px; top: 50%; margin-top: -3px; border: 4px solid transparent; border-top: 6px solid #bdbdbd; border-bottom: 0; pointer-events: none; }
.combo::before { content: ""; position: absolute; right: 18px; top: 0; bottom: 0; width: 1px; background: #4a4a4a; }
.ws { width: 166px; height: 18px; }

.ic { width: 23px; height: 22px; display: flex; align-items: center; justify-content: center; flex: none; }
.ic svg { width: 18px; height: 18px; }
.on { background: #5285a6; }
.sep { width: 20px; height: 18px; background: linear-gradient(#8a8a8a, #8a8a8a) center / 3px 12px no-repeat, linear-gradient(#777, #777) center / 1px 18px no-repeat; }
.chev { width: 18px; height: 18px; display: flex; justify-content: center; align-items: center; background: linear-gradient(#666, #666) 7px 0 / 1px 18px no-repeat; }
.chev::after { content: ""; border: 4px solid transparent; border-left: 4px solid #888; border-right: 0; }
.down { width: 18px; display: flex; justify-content: center; }
.down::after { content: ""; border: 3px solid transparent; border-top: 5px solid #999; border-bottom: 0; }
.grip { width: 13px; align-self: stretch; background: radial-gradient(circle at 1px 1px, #777 1px, transparent 1px) 3px 0 / 4px 4px; background-clip: content-box; padding: 2px 6px 2px 3px; }
.status { display: flex; align-items: center; height: 28px; padding-top: 2px; }
.mode { width: 96px; height: 20px; }
.flat { width: 98px; height: 22px; padding-left: 6px; text-align: left; background: #404040; border: 1px solid #383838; border-radius: 2px; }
.user { display: flex; align-items: center; align-self: flex-start; width: 79px; height: 15px; margin-top: 1px; background: #5a5a5a; color: #eee; font-weight: 600; font-size: 9px; gap: 2px; padding-left: 3px; }
.user svg { width: 12px; height: 12px; }
.tri { border: 3px solid transparent; border-top: 4px solid #bbb; border-bottom: 0; }
.tri.big { border-width: 6px 5px 0; border-top-color: #c4c4c4; }
.right { display: flex; margin-left: auto; padding-right: 2px; }
.band { height: 5px; border-top: 2px solid #373737; border-bottom: 1px solid #373737; }

.shelf { display: flex; height: 63px; }
.shelf-side { width: 20px; height: 61px; background: #373737; display: flex; flex-direction: column; align-items: center; justify-content: space-between; padding: 6px 0 10px; margin-left: 1px; }
.shelf-side svg { width: 10px; height: 10px; }
.dash { width: 8px; height: 4px; margin-top: 5px; background: #888; }
.shelf-body { flex: 1; }
.shelf-tabs { height: 17px; background: #373737; margin: 0 2px 0 1px; padding-left: 2px; }
.shelf-set { display: flex; width: 1693px; height: 17px; }
.shelf-set button { flex: 1 1 auto; height: 16px; margin-top: 1px; padding: 0; color: #8f8f8f; border: 1px solid #303030; border-width: 1px 1px 0 0; background: #3b3b3b; }
.shelf-set .sel, .ptab, .ltabs .sel, .ntabs .sel { background: #444; color: #ddd; }
.shelf-items { position: relative; display: flex; padding: 3px 0 0 8px; }
.slot { width: 36px; height: 34px; }
.slot svg { width: 36px; height: 34px; }
.py svg { width: 22px; height: 20px; }
.slot.py { padding-left: 6px; height: 26px; display: flex; align-items: flex-start; }
.mini-scroll { margin: 1px 6px 0 auto; width: 12px; height: 35px; background: #333; display: flex; flex-direction: column; align-items: center; justify-content: space-between; padding: 3px 0; }
.up { border: 4px solid transparent; border-bottom: 5px solid #b0b0b0; border-top: 0; }
.dn { border: 4px solid transparent; border-top: 5px solid #b0b0b0; border-bottom: 0; }
.lt { border: 4px solid transparent; border-right: 5px solid #b0b0b0; border-left: 0; }
.rt { border: 4px solid transparent; border-left: 5px solid #b0b0b0; border-right: 0; }
.mini-scroll .thumb { width: 10px; height: 12px; border-radius: 3px; background: #666; }

.main { flex: 1; display: grid; grid-template-columns: 43px 242px 839fr 1089fr 259px 18px; gap: 2px; border-top: 3px solid #373737; background: #373737; min-height: 700px; }
.main > * { min-width: 0; min-height: 0; }
.toolbox { background: #444; display: flex; flex-direction: column; align-items: center; }
.hgrip { width: 43px; height: 8px; margin-bottom: 2px; background: radial-gradient(circle at 1px 1px, #777 1px, transparent 1px) 0 2px / 4px 3px; }
.tool { width: 35px; height: 36px; display: flex; align-items: center; justify-content: center; flex: none; }
.tool svg { width: 26px; height: 26px; }
.rule { width: 35px; height: 2px; background: #888; margin: 76px 0 5px; }
.lay svg { width: 30px; height: 30px; }
.logo { width: 31px; height: 31px; margin: auto 0 6px; }

.ptabs { height: 17px; padding-left: 2px; }
.ptab { height: 17px; padding: 0 10px; }
.outliner, .nodeed { display: flex; flex-direction: column; }
.obody { flex: 1; background: #444; display: flex; flex-direction: column; align-items: stretch; padding: 0 2px 0 3px; }
.omenu { height: 22px; padding-left: 9px; gap: 16px; }
.osearch { display: flex; align-items: center; height: 22px; gap: 5px; padding-left: 5px; margin-top: 1px; }
.osearch svg { width: 17px; height: 17px; }
.search { flex: 1; height: 19px; display: flex; align-items: center; background: #2b2b2b; border-radius: 2px; padding: 0 3px; }
.search input { flex: 1; min-width: 0; }
.search input::placeholder { color: #7d7d7d; opacity: 1; }
.tree-wrap { flex: 1; display: flex; justify-content: space-between; background: #373737; margin-top: 2px; }
.tree { list-style: none; margin: 0; padding: 0; display: grid; grid-auto-rows: 1fr; height: 312px; flex: 1; }
.tree li { position: relative; display: flex; align-items: center; padding-left: 33px; gap: 1px; }
.tree svg { width: 18px; height: 16px; }
.tree .child { padding-left: 45px; }
.tree .dim span { color: #666; }
.child::before { content: ""; position: absolute; left: 24px; top: -5px; height: 25px; width: 7px; border-left: 1px solid #888; }
.child.last::before { height: 15px; }
.child::after { content: ""; position: absolute; left: 24px; top: 9px; width: 8px; height: 1px; background: #888; }
.leaf::after { width: 12px; }
.box { position: absolute; left: 20px; top: 5px; width: 9px; height: 9px; border: 1px solid #888; background: linear-gradient(#999, #999) center / 7px 1px no-repeat; }
.box.plus { left: 32px; background: linear-gradient(#999, #999) center / 7px 1px no-repeat, linear-gradient(#999, #999) center / 1px 7px no-repeat; }
.vscroll { width: 12px; display: flex; flex-direction: column; align-items: center; gap: 4px; padding: 3px 0 4px; background: #3a3a3a; }
.vscroll .thumb { flex: 1; width: 10px; border-radius: 4px; background: #5d5d5d; }
.hscroll { display: flex; align-items: center; gap: 4px; height: 12px; padding: 0 16px 2px 3px; background: #373737; }
.hscroll .thumb { flex: 1; height: 10px; border-radius: 4px; background: #5d5d5d; }
.dots { width: 82px; height: 2px; margin: 3px auto; background: repeating-linear-gradient(90deg, #8a8a8a 0 2px, transparent 2px 4px); }

.viewport { background: #444; display: flex; flex-direction: column; padding: 0 4px 3px; }
.vmenu { height: 21px; padding: 3px 0 0 8px; gap: 16px; }
.vbar { display: flex; align-items: center; height: 20px; overflow: hidden; }
.vbar .sep { width: 9px; }
.vbar .ic { width: 19px; height: 19px; }
.vbar .ic svg { width: 17px; height: 17px; }
.num { width: 38px; height: 15px; background: #2b2b2b; padding-left: 6px; flex: none; }
.iris, .vbar .gam { width: 22px; }
.vbar .num { margin-left: 1px; }
.vbar .toggle { margin-left: 2px; width: 18px; }
.toggle span { width: 14px; height: 14px; border-radius: 7px; background: #4ab4be; color: #1d4957; font-size: 6px; line-height: 14px; text-align: center; }
.srgb { flex: 1; text-align: left; background: #5a5a5a; padding-left: 2px; height: 17px; margin-left: 1px; }
.scene { position: relative; flex: 1; overflow: hidden; background: #a3a3a3; border-top: 1px solid #2f2f2f; }
.canvas { position: absolute; inset: 0; width: 100%; height: 100%; }
.note { font: bold 8px "Liberation Sans", Arial, sans-serif; fill: #111; }
.hud { position: absolute; left: 14px; top: -4px; height: 98px; border-collapse: collapse; color: #fff; font: bold 11px/14px "Liberation Sans", Arial, sans-serif; }
.hud th { text-align: left; padding: 0; width: 60px; }
.hud td { text-align: right; padding: 0; width: 62px; }
.hud td:nth-child(2) { width: 54px; }
.gizmo { position: absolute; left: 15px; bottom: 8px; width: 32px; height: 44px; font: bold 11px "Liberation Mono", monospace; }
.camname { position: absolute; left: 47%; bottom: 8px; color: #fff; font: bold 11px/14px "Liberation Sans", Arial, sans-serif; }

.nbody { flex: 1; display: flex; flex-direction: column; background: #444; border: 1px solid #6b6b6b; padding: 0 2px 2px; margin-left: 1px; }
.nmenu { height: 20px; padding-left: 8px; gap: 16px; }
.nbar { display: flex; align-items: center; height: 26px; margin: 1px 0 0 -2px; padding-right: 3px; }
.nbar .sep { width: 8px; }
.nbar .ic { width: 27px; height: 25px; }
.depth { width: 26px; height: 25px; margin: 0 1px; background: #2b2b2b; text-align: center; flex: none; }
.nbar .search { margin-left: 4px; }
.ntabs { display: flex; height: 19px; background: #373737; }
.ntabs button { padding: 0 11px; border-right: 1px solid #2f2f2f; }
.graph { position: relative; flex: 1; background: #2f2f2f; border: 2px solid #4a6a82; overflow: hidden; }
.ntitle { font: 11px "Open Sans", "Noto Sans", sans-serif; fill: #ddd; }
.picked { fill: #3edc94; }
.nattr { font: 11px "Open Sans", "Noto Sans", sans-serif; fill: #ddd; text-anchor: end; }
.tiny { font: 6px "Liberation Sans", Arial, sans-serif; fill: #bbb; }
.tiny.wide { font-size: 7px; }

.channel { background: #444; display: flex; flex-direction: column; padding: 1px 0 0 5px; }
.cicons { display: flex; justify-content: flex-end; height: 19px; padding-right: 4px; }
.cicons .ic { width: 20px; height: 18px; }
.cicons .ic svg { width: 15px; height: 15px; }
.cmenu { height: 24px; padding-left: 7px; gap: 16px; }
.cnames { display: flex; flex-direction: column; height: 61px; font-size: 11px; line-height: 16px; color: #ccc; }
.cnames b { font-weight: 600; }
.cnames .ind { padding-left: 10px; }
.clist { flex: 664 1 0; background: #2b2b2b; }
.layered { flex: 311 1 0; display: flex; flex-direction: column; border: 1px solid #373737; margin: 2px 2px 3px 0; min-height: 0; }
.ltabs { display: flex; height: 16px; background: #373737; flex: none; }
.ltabs button { padding: 0 10px; color: #888; border-right: 1px solid #303030; }
.lmenu { height: 22px; padding-left: 9px; gap: 16px; flex: none; }
.licons { display: flex; justify-content: flex-end; height: 23px; flex: none; }
.licons .ic { width: 24px; }
.licons .ic svg { width: 17px; height: 17px; }
.llist { flex: 1; background: #2b2b2b; margin-right: 1px; }
.hscroll .part { flex: 0 0 164px; margin-right: auto; }
.layered .hscroll { padding-right: 5px; padding-left: 5px; flex: none; }
.vtabs { display: flex; flex-direction: column; gap: 1px; padding-top: 1px; }
.vtabs button { writing-mode: vertical-rl; color: #888; background: #3b3b3b; }
.vtabs .sel { background: #444; color: #ddd; }
.t1 { height: 143px; }
.t2 { height: 100px; }
.t3 { height: 92px; }

.row { display: flex; align-items: center; flex: none; border-top: 2px solid #373737; }
.timeline { height: 39px; border-top-width: 3px; }
.track { position: relative; flex: 1; height: 28px; background: #2b2b2b; overflow: hidden; }
.tick { position: absolute; top: 0; height: 28px; padding-left: 4px; color: #777; line-height: 12px; }
.tick::before { content: ""; position: absolute; left: 0; bottom: 0; width: 1px; height: 13px; background: #999; }
.tick b { display: block; font-weight: 400; color: #fff; line-height: 14px; }
.current { position: absolute; left: 98.74%; width: 17px; height: 28px; background: #555; }
.field { width: 87px; height: 24px; flex: none; background: #2b2b2b; padding-left: 7px; border-radius: 2px; }
.cur { height: 19px; margin: 0 7px 0 8px; }
.play { display: flex; padding-right: 4px; }
.range { height: 35px; gap: 8px; }
.range .grip { margin-right: -8px; }
.slider { flex: 1; height: 24px; background: #3a3a3a; padding: 3px 9px 0; }
.bar { width: 60.4%; height: 18px; background: #5d5d5d; display: flex; align-items: center; padding: 0 3px; gap: 5px; border-radius: 2px; }
.handle { width: 14px; height: 13px; background: #919191; border-radius: 2px; }
.end { margin-left: auto; }
.rset { display: flex; align-items: center; width: 514px; margin-left: -9px; }
.rset .sep { width: 12px; }
.rset .sep.wide { width: 21px; }
.hollow { width: 26px; display: flex; justify-content: center; }
.hollow::after { content: ""; width: 8px; height: 7px; clip-path: polygon(0 0, 100% 0, 50% 100%); background: #7a7a7a; }
.rset .flat { width: 101px; height: 24px; }
.fps { width: 81px; height: 18px; margin: 0 9px 0 2px; }
.cache { border: solid #2fc22f; border-width: 0 1px; width: 23px; margin: 0 4px 0 7px; background: linear-gradient(#2fc22f, #2fc22f) 0 0 / 3px 1px no-repeat, linear-gradient(#2fc22f, #2fc22f) 0 100% / 3px 1px no-repeat, linear-gradient(#2fc22f, #2fc22f) 100% 0 / 3px 1px no-repeat, linear-gradient(#2fc22f, #2fc22f) 100% 100% / 3px 1px no-repeat; }
.cache i { width: 13px; height: 10px; background: #55504b; }
.auto { background: #cf3238; margin: 0 7px 0 5px; }
.cmd { height: 34px; }
.cmd label { padding: 0 7px 0 5px; width: 45px; color: #ccc; }
.line { flex: 1; height: 23px; background: #2b2b2b; line-height: 23px; padding-left: 5px; }
.split { width: 10px; height: 12px; background: linear-gradient(#777, #777) center / 1px 10px no-repeat; }
.cmd .ic { margin: 0 6px 0 4px; }
.help { height: 24px; }
.edge { height: 2px; background: #c3cfcc; border-top: 1px solid #373737; }
</style>
